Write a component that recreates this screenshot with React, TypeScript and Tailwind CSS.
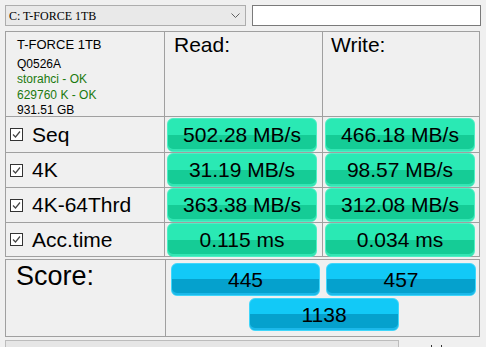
import React from "react";

const rows = [
  { name: "Seq", read: "502.28 MB/s", write: "466.18 MB/s" },
  { name: "4K", read: "31.19 MB/s", write: "98.57 MB/s" },
  { name: "4K-64Thrd", read: "363.38 MB/s", write: "312.08 MB/s" },
  { name: "Acc.time", read: "0.115 ms", write: "0.034 ms" },
];

function Check() {
  return (
    <span className="w-[13px] h-[13px] border border-[#333333] bg-white flex items-center justify-center shrink-0">
      <svg width="9" height="9" viewBox="0 0 9 9">
        <path d="M1 4.5 L3.5 7 L8 1.5" fill="none" stroke="#444444" strokeWidth="1.2" />
      </svg>
    </span>
  );
}

function GreenBox({ text }: { text: string }) {
  return (
    <div className="w-[150px] h-[34px] rounded-[6px] border border-[#4eeec4] bg-[linear-gradient(to_bottom,#2ae9b4_0%,#2ae9b4_50%,#15cc96_50%,#15cc96_100%)] shadow-[inset_0_-2px_0_#34e6b4] flex items-center justify-center text-[21px] text-black">
      {text}
    </div>
  );
}

function BlueBox({ text, w }: { text: string; w: string }) {
  return (
    <div
      className={`${w} h-[33px] rounded-[6px] border border-[#3fd6fb] bg-[linear-gradient(to_bottom,#12c9f7_0%,#12c9f7_50%,#05a1cd_50%,#05a1cd_100%)] shadow-[inset_0_-2px_0_#1cb9ea] flex items-center justify-center text-[21px] text-black`}
    >
      {text}
    </div>
  );
}

export default function App() {
  return (
    <div className="w-[486px] h-[347px] overflow-hidden bg-[#f0f0f0] pl-[5px] pt-[5px] font-['Liberation_Sans',Arial,sans-serif] text-black">
      <div className="flex gap-[6px] h-[21px]">
        <div className="w-[241px] h-full border border-[#adadad] bg-[#e9e9e9] flex items-center justify-between pl-[3px] pr-[5px]">
          <span className="font-['Liberation_Serif','Times_New_Roman',serif] text-[12px]">C: T-FORCE 1TB</span>
          <svg width="9" height="6" viewBox="0 0 9 6">
            <path d="M0.5 0.5 L4.5 4.5 L8.5 0.5" fill="none" stroke="#606060" strokeWidth="1" />
          </svg>
        </div>
        <div className="w-[229px] h-full border border-[#7a7a7a] bg-white" />
      </div>

      <div className="mt-[5px] w-[475px] grid grid-cols-[158px_157px_156px] grid-rows-[84px_35px_34px_34px_33px] gap-px bg-[#a0a0a0] border border-[#a0a0a0]">
        <div className="bg-[#f0f0f0] pl-[11px] pt-[4px]">
          <div className="text-[13px] leading-[18px]">T-FORCE 1TB</div>
          <div className="text-[12px] leading-[16px] mt-[2px]">Q0526A</div>
          <div className="text-[12px] leading-[15.5px] text-[#1b7a0e]">storahci - OK</div>
          <div className="text-[12px] leading-[15.5px] text-[#1b7a0e]">629760 K - OK</div>
          <div className="text-[12px] leading-[15.5px]">931.51 GB</div>
        </div>
        <div className="bg-[#f0f0f0] pl-[9px] pt-[2px] text-[21px] leading-[21px]">Read:</div>
        <div className="bg-[#f0f0f0] pl-[8px] pt-[2px] text-[21px] leading-[21px]">Write:</div>

        {rows.map((r) => (
          <React.Fragment key={r.name}>
            <div className="bg-[#f0f0f0] flex items-center pl-[4px] gap-[9px] text-[21px]">
              <Check />
              <span>{r.name}</span>
            </div>
            <div className="bg-[#f0f0f0] flex items-center pl-[2px]">
              <GreenBox text={r.read} />
            </div>
            <div className="bg-[#f0f0f0] flex items-center pl-[2px]">
              <GreenBox text={r.write} />
            </div>
          </React.Fragment>
        ))}
      </div>

      <div className="mt-[2px] w-[475px] h-[78px] grid grid-cols-[159px_313px] gap-px bg-[#a0a0a0] border border-[#a0a0a0]">
        <div className="bg-[#f0f0f0] pl-[10px] pt-[1px] text-[27px] leading-[30px]">Score:</div>
        <div className="bg-[#f0f0f0] pl-[5px] pt-[3px] flex flex-col">
          <div className="flex gap-[6px]">
            <BlueBox text="445" w="w-[149px]" />
            <BlueBox text="457" w="w-[150px]" />
          </div>
          <div className="mt-[2px] pl-[78px]">
            <BlueBox text="1138" w="w-[150px]" />
          </div>
        </div>
      </div>

      <div className="mt-[3px] flex items-start">
        <div className="w-[394px] h-[20px] border border-[#bcbcbc] bg-[#e6e6e6]" />
        <div className="ml-[32px] mt-[5px] flex gap-[9px]">
          <span className="w-px h-[2px] bg-[#333]" />
          <span className="w-px h-[2px] bg-[#333]" />
        </div>
      </div>
    </div>
  );
}
